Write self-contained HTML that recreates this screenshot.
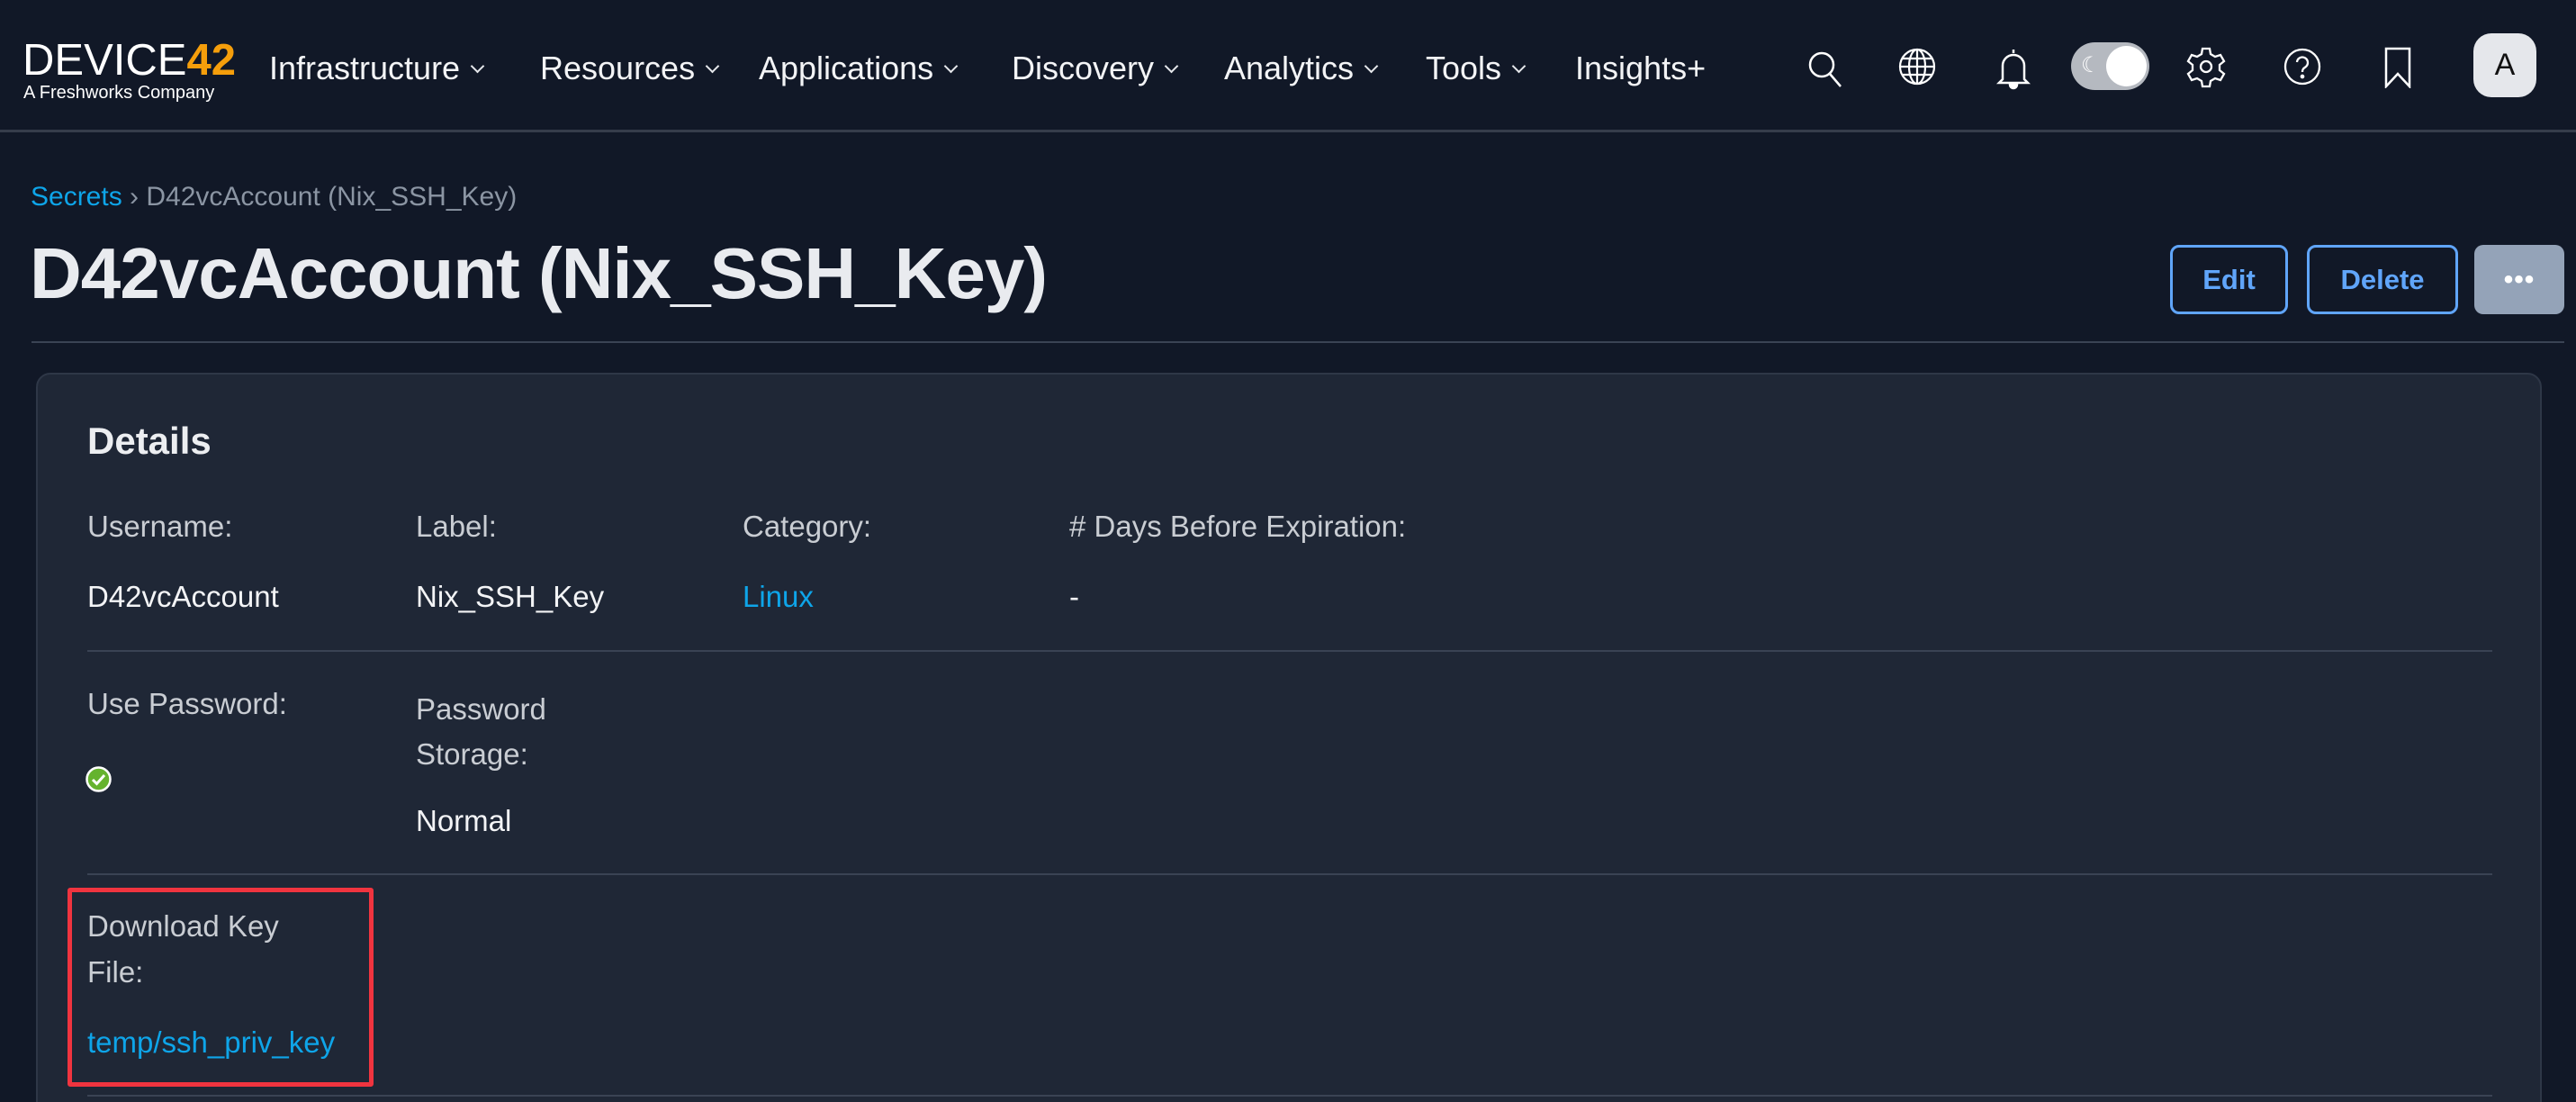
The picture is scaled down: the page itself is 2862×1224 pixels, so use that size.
<!DOCTYPE html>
<html><head><meta charset="utf-8"><style>
*{margin:0;padding:0;box-sizing:border-box}
html{width:2862px;height:1224px;overflow:hidden}
body{width:2862px;height:1224px;background:#111827;font-family:"Liberation Sans",sans-serif;color:#e5e7eb;position:relative;overflow:hidden}
.a{position:absolute;white-space:nowrap}
.nav{top:55px;font-size:36px;color:#f3f4f6}
.chev{display:inline-block;width:11px;height:11px;border-right:2.5px solid #e5e7eb;border-bottom:2.5px solid #e5e7eb;transform:rotate(45deg);margin-left:14px;position:relative;top:-9px}
.lab{font-size:33px;color:#c9cdd3}
.val{font-size:33px;color:#f3f4f6}
.link{color:#0ea5e9}
.btn{position:absolute;top:272px;height:77px;border:3px solid #60a5fa;border-radius:10px;color:#60a5fa;font-size:31px;font-weight:bold;display:flex;align-items:center;justify-content:center}
.hr{position:absolute;height:2px;background:#3a4354}
svg{position:absolute}
</style></head><body>
<!-- header -->
<div class="a" style="left:25px;top:42px;font-size:49px;color:#fff;line-height:50px">DEVICE<span style="color:#f59e0b;font-weight:bold">42</span></div>
<div class="a" style="left:26px;top:92px;font-size:20px;color:#fff">A Freshworks Company</div>
<div class="a nav" style="left:299px">Infrastructure<span class="chev"></span></div>
<div class="a nav" style="left:600px">Resources<span class="chev"></span></div>
<div class="a nav" style="left:843px">Applications<span class="chev"></span></div>
<div class="a nav" style="left:1124px">Discovery<span class="chev"></span></div>
<div class="a nav" style="left:1360px">Analytics<span class="chev"></span></div>
<div class="a nav" style="left:1584px">Tools<span class="chev"></span></div>
<div class="a nav" style="left:1750px">Insights+</div>
<svg style="left:2006px;top:54px" width="44" height="44" viewBox="0 0 44 44" fill="none" stroke="#fff" stroke-width="2.5"><circle cx="18" cy="18" r="13"/><path d="M27 28l12 14"/></svg>
<svg style="left:2108px;top:52px" width="44" height="44" viewBox="0 0 44 44" fill="none" stroke="#fff" stroke-width="2.2"><circle cx="22" cy="22" r="19"/><ellipse cx="22" cy="22" rx="9" ry="19"/><path d="M3 22h38M6 13h32M6 31h32M22 3v38"/></svg>
<svg style="left:2216px;top:52px" width="42" height="48" viewBox="0 0 42 48" fill="none" stroke="#fff" stroke-width="2.5"><path d="M21 3v4M9 36V21a12 12 0 0124 0v15l4 4H5z"/><path d="M17 42a4 4 0 008 0z" fill="#fff"/></svg>
<div class="a" style="left:2301px;top:47px;width:87px;height:53px;border-radius:27px;background:#b5b9c0"></div>
<div class="a" style="left:2340px;top:51px;width:45px;height:45px;border-radius:50%;background:#fff"></div>
<div class="a" style="left:2312px;top:58px;font-size:24px;color:#fff">☾</div>
<svg style="left:2428px;top:50px" width="46" height="48" viewBox="0 0 46 48" fill="none" stroke="#fff" stroke-width="2.3"><path d="M19 4h8l1 6 5 3 6-2 4 7-5 4v6l5 4-4 7-6-2-5 3-1 6h-8l-1-6-5-3-6 2-4-7 5-4v-6l-5-4 4-7 6 2 5-3z"/><circle cx="23" cy="24" r="6"/></svg>
<svg style="left:2536px;top:52px" width="44" height="44" viewBox="0 0 44 44" fill="none" stroke="#fff" stroke-width="2.3"><circle cx="22" cy="22" r="19"/><path d="M16 17a6 6 0 1110 5c-3 2-4 3-4 6"/><circle cx="22" cy="33" r="1.2" fill="#fff"/></svg>
<svg style="left:2648px;top:52px" width="32" height="46" viewBox="0 0 32 46" fill="none" stroke="#fff" stroke-width="2.5"><path d="M3 2h26v42L16 30 3 44z"/></svg>
<div class="a" style="left:2748px;top:37px;width:70px;height:71px;border-radius:20px;background:#e5e7eb;color:#111;font-size:34px;display:flex;align-items:center;justify-content:center">A</div>
<div class="hr" style="left:0;top:144px;width:2862px;background:#363d4b;height:3px"></div>
<!-- title area -->
<div class="a" style="left:34px;top:202px;font-size:30px;color:#8b95a3"><span style="color:#0ea5e9">Secrets</span> › D42vcAccount (Nix_SSH_Key)</div>
<div class="a" style="left:33px;top:258px;font-size:80px;font-weight:bold;color:#e9ebef;letter-spacing:-1px">D42vcAccount (Nix_SSH_Key)</div>
<div class="btn" style="left:2411px;width:131px">Edit</div>
<div class="btn" style="left:2563px;width:168px">Delete</div>
<div class="a" style="left:2749px;top:272px;width:100px;height:77px;border-radius:10px;background:#94a3b8;color:#fff;font-size:30px;display:flex;align-items:center;justify-content:center;font-weight:bold;letter-spacing:1px">•••</div>
<div class="hr" style="left:35px;top:379px;width:2814px"></div>
<!-- card -->
<div class="a" style="left:40px;top:414px;width:2784px;height:830px;background:#1f2736;border:2px solid #2e3747;border-radius:16px"></div>
<div class="a" style="left:97px;top:466px;font-size:42px;font-weight:bold;color:#eceef1">Details</div>
<div class="a lab" style="left:97px;top:566px">Username:</div>
<div class="a lab" style="left:462px;top:566px">Label:</div>
<div class="a lab" style="left:825px;top:566px">Category:</div>
<div class="a lab" style="left:1188px;top:566px"># Days Before Expiration:</div>
<div class="a val" style="left:97px;top:644px">D42vcAccount</div>
<div class="a val" style="left:462px;top:644px">Nix_SSH_Key</div>
<div class="a val link" style="left:825px;top:644px">Linux</div>
<div class="a val" style="left:1188px;top:644px">-</div>
<div class="hr" style="left:97px;top:722px;width:2672px"></div>
<div class="a lab" style="left:97px;top:763px">Use Password:</div>
<div class="a lab" style="left:462px;top:763px;line-height:50px;white-space:normal">Password<br>Storage:</div>
<svg style="left:95px;top:851px" width="29" height="29" viewBox="0 0 29 29"><circle cx="14.5" cy="14.5" r="13" fill="#65b32e" stroke="#fff" stroke-width="2.5"/><path d="M8 15l4.5 4.5L21 10" fill="none" stroke="#fff" stroke-width="3"/></svg>
<div class="a val" style="left:462px;top:893px">Normal</div>
<div class="hr" style="left:97px;top:970px;width:2672px"></div>
<div class="a" style="left:75px;top:986px;width:340px;height:221px;border:5px solid #f0343f;border-radius:3px"></div>
<div class="a lab" style="left:97px;top:1003px;line-height:51px;white-space:normal">Download Key<br>File:</div>
<div class="a val link" style="left:97px;top:1139px">temp/ssh_priv_key</div>
<div class="hr" style="left:97px;top:1216px;width:2672px"></div>
</body></html>
